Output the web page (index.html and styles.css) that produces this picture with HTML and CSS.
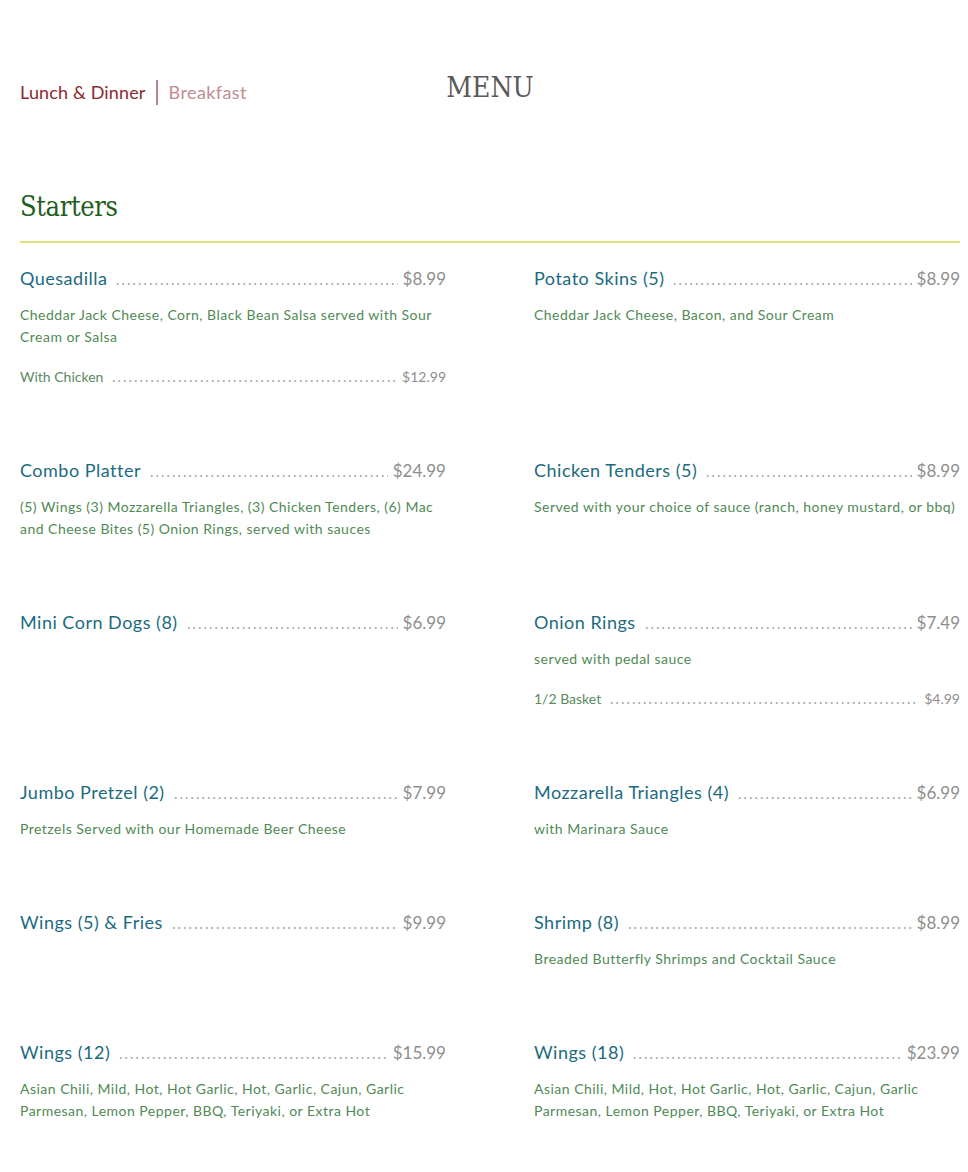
FILE: index.html
```html
<!DOCTYPE html>
<html lang="en">
<head>
<meta charset="utf-8">
<title>Menu</title>
<link rel="stylesheet" href="styles.css">
</head>
<body>
<div class="page">
  <header class="top">
    <nav class="tabs">
      <a class="tab active" href="#">Lunch &amp; Dinner</a>
      <span class="sep"></span>
      <a class="tab" href="#">Breakfast</a>
    </nav>
    <h1 class="title">MENU</h1>
    <div></div>
  </header>

  <h2 class="section">Starters</h2>

  <div class="grid">
    <div class="item">
      <div class="row head"><span class="name">Quesadilla</span><span class="dots"></span><span class="price">$8.99</span></div>
      <p class="desc">Cheddar Jack Cheese, Corn, Black Bean Salsa served with Sour Cream or Salsa</p>
      <div class="row sub"><span class="name">With Chicken</span><span class="dots"></span><span class="price">$12.99</span></div>
    </div>
    <div class="item">
      <div class="row head"><span class="name">Potato Skins (5)</span><span class="dots"></span><span class="price">$8.99</span></div>
      <p class="desc">Cheddar Jack Cheese, Bacon, and Sour Cream</p>
    </div>

    <div class="item">
      <div class="row head"><span class="name">Combo Platter</span><span class="dots"></span><span class="price">$24.99</span></div>
      <p class="desc">(5) Wings (3) Mozzarella Triangles, (3) Chicken Tenders, (6) Mac and Cheese Bites (5) Onion Rings, served with sauces</p>
    </div>
    <div class="item">
      <div class="row head"><span class="name">Chicken Tenders (5)</span><span class="dots"></span><span class="price">$8.99</span></div>
      <p class="desc">Served with your choice of sauce (ranch, honey mustard, or bbq)</p>
    </div>

    <div class="item">
      <div class="row head"><span class="name">Mini Corn Dogs (8)</span><span class="dots"></span><span class="price">$6.99</span></div>
    </div>
    <div class="item">
      <div class="row head"><span class="name">Onion Rings</span><span class="dots"></span><span class="price">$7.49</span></div>
      <p class="desc">served with pedal sauce</p>
      <div class="row sub"><span class="name">1/2 Basket</span><span class="dots"></span><span class="price">$4.99</span></div>
    </div>

    <div class="item">
      <div class="row head"><span class="name">Jumbo Pretzel (2)</span><span class="dots"></span><span class="price">$7.99</span></div>
      <p class="desc">Pretzels Served with our Homemade Beer Cheese</p>
    </div>
    <div class="item">
      <div class="row head"><span class="name">Mozzarella Triangles (4)</span><span class="dots"></span><span class="price">$6.99</span></div>
      <p class="desc">with Marinara Sauce</p>
    </div>

    <div class="item">
      <div class="row head"><span class="name">Wings (5) &amp; Fries</span><span class="dots"></span><span class="price">$9.99</span></div>
    </div>
    <div class="item">
      <div class="row head"><span class="name">Shrimp (8)</span><span class="dots"></span><span class="price">$8.99</span></div>
      <p class="desc">Breaded Butterfly Shrimps and Cocktail Sauce</p>
    </div>

    <div class="item">
      <div class="row head"><span class="name">Wings (12)</span><span class="dots"></span><span class="price">$15.99</span></div>
      <p class="desc">Asian Chili, Mild, Hot, Hot Garlic, Hot, Garlic, Cajun, Garlic Parmesan, Lemon Pepper, BBQ, Teriyaki, or Extra Hot</p>
    </div>
    <div class="item">
      <div class="row head"><span class="name">Wings (18)</span><span class="dots"></span><span class="price">$23.99</span></div>
      <p class="desc">Asian Chili, Mild, Hot, Hot Garlic, Hot, Garlic, Cajun, Garlic Parmesan, Lemon Pepper, BBQ, Teriyaki, or Extra Hot</p>
    </div>
  </div>
</div>
</body>
</html>
```

FILE: styles.css
```css
* { box-sizing: border-box; }

html, body {
  margin: 0;
  padding: 0;
  background: #ffffff;
}

body {
  font-family: Lato, "Open Sans", sans-serif;
  color: #4f8a55;
}

.page {
  padding: 60px 8px 40px 20px;
}

.top {
  display: grid;
  grid-template-columns: 1fr auto 1fr;
  align-items: center;
  height: 64px;
}

.tabs {
  display: flex;
  align-items: center;
  gap: 10px;
  font-size: 18px;
  line-height: 24px;
  letter-spacing: 0.15px;
}

.tab {
  text-decoration: none;
  color: #c48b90;
}

.tab.active {
  color: #8a2a31;
}

.tab + .sep + .tab {
  letter-spacing: 0.4px;
  margin-left: 1px;
}

.sep {
  display: block;
  width: 2px;
  height: 25px;
  background: #b8868a;
}

.title {
  margin: 0 0 8px 0;
  font-family: "DejaVu Serif", "Liberation Serif", serif;
  font-stretch: condensed;
  font-weight: normal;
  font-size: 28px;
  line-height: 34px;
  color: #5a5a5a;
}

.section {
  margin: 66px 0 0 0;
  padding-bottom: 17px;
  border-bottom: 2px solid #dfe07c;
  font-family: "DejaVu Serif", "Liberation Serif", serif;
  font-stretch: condensed;
  font-weight: normal;
  font-size: 27px;
  line-height: 34px;
  letter-spacing: -0.4px;
  color: #1f5e22;
}

.grid {
  margin-top: 25px;
  display: grid;
  grid-template-columns: 1fr 1fr;
  column-gap: 88px;
  row-gap: 72px;
}

.row {
  display: flex;
  align-items: baseline;
}

.dots {
  flex: 1;
  align-self: flex-end;
  height: 2px;
  margin: 0 5px 4px 8px;
  background-image: radial-gradient(circle, #b0b0b0 0.8px, transparent 1.1px);
  background-size: 5.5px 2px;
  background-repeat: repeat-x;
}

.head {
  font-size: 18px;
  line-height: 20px;
}

.head .name {
  color: #1b6b80;
  letter-spacing: 0.5px;
}

.head .price {
  font-size: 17px;
  color: #8e8e8e;
}

.desc {
  margin: 15px 0 0 0;
  font-size: 14px;
  line-height: 22px;
  letter-spacing: 0.48px;
  color: #4f8a55;
}

.sub {
  margin-top: 18px;
  font-size: 14px;
  line-height: 22px;
}

.sub .name {
  color: #5a8a5e;
}

.sub .price {
  color: #8e8e8e;
}

.sub .dots {
  margin-bottom: 6px;
}
```
